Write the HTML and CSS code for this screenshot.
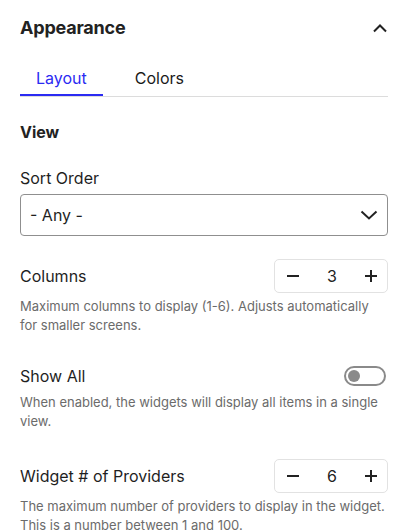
FILE: index.html
```html
<!DOCTYPE html>
<html>
<head>
<meta charset="utf-8">
<link rel="stylesheet" href="styles.css">
</head>
<body>
<div class="panel">
  <div class="header">
    <h2 class="title">Appearance</h2>
    <svg class="chev-up" width="16" height="10" viewBox="0 0 16 10"><path d="M2 8.5 L8 2.5 L14 8.5" fill="none" stroke="#222" stroke-width="2"/></svg>
  </div>
  <div class="tabs">
    <div class="tab active">Layout</div>
    <div class="tab">Colors</div>
  </div>
  <div class="section-title">View</div>
  <div class="label sort-label">Sort Order</div>
  <div class="select">
    <span>- Any -</span>
    <svg width="18" height="10" viewBox="0 0 18 10"><path d="M1.5 1.5 L9 8.5 L16.5 1.5" fill="none" stroke="#222" stroke-width="2"/></svg>
  </div>
  <div class="row row-columns">
    <div class="label">Columns</div>
    <div class="stepper">
      <svg width="12" height="12" viewBox="0 0 12 12"><path d="M0 6 H12" stroke="#222" stroke-width="2"/></svg>
      <span class="val">3</span>
      <svg width="12" height="12" viewBox="0 0 12 12"><path d="M0 6 H12 M6 0 V12" stroke="#222" stroke-width="2"/></svg>
    </div>
  </div>
  <p class="desc">Maximum columns to display (1-6). Adjusts automatically for smaller screens.</p>
  <div class="row row-show">
    <div class="label">Show All</div>
    <div class="toggle"><div class="knob"></div></div>
  </div>
  <p class="desc desc-show">When enabled, the widgets will display all items in a single view.</p>
  <div class="row row-widget">
    <div class="label">Widget # of Providers</div>
    <div class="stepper">
      <svg width="12" height="12" viewBox="0 0 12 12"><path d="M0 6 H12" stroke="#222" stroke-width="2"/></svg>
      <span class="val">6</span>
      <svg width="12" height="12" viewBox="0 0 12 12"><path d="M0 6 H12 M6 0 V12" stroke="#222" stroke-width="2"/></svg>
    </div>
  </div>
  <p class="desc">The maximum number of providers to display in the widget. This is a number between 1 and 100.</p>
</div>
</body>
</html>
```
FILE: styles.css
```css
html, body {
  margin: 0;
  padding: 0;
  background: #fff;
}
body {
  font-family: Inter, "Noto Sans", sans-serif;
  color: #222;
}
.panel {
  width: 368px;
  margin-left: 20px;
  display: flex;
  flex-direction: column;
}
.header {
  margin-top: 16px;
  height: 24px;
  display: flex;
  align-items: center;
  justify-content: space-between;
}
.title {
  margin: 0;
  font-size: 18px;
  font-weight: 700;
  line-height: 24px;
  letter-spacing: -0.2px;
  color: #222;
}
.tabs {
  margin-top: 18px;
  display: flex;
  gap: 16px;
  border-bottom: 1px solid #dcdcdc;
}
.tab {
  padding: 8px 16px 4px;
  font-size: 16px;
  line-height: 24px;
  border-bottom: 2px solid transparent;
  color: #1a1a1a;
}
.tab.active {
  color: #2b2bf2;
  border-bottom-color: #2b2bf2;
}
.section-title {
  margin-top: 24px;
  font-size: 16px;
  font-weight: 700;
  line-height: 22px;
  color: #222;
}
.label {
  font-size: 16px;
  line-height: 22px;
  color: #1f1f1f;
}
.sort-label {
  margin-top: 24px;
}
.select {
  margin-top: 5px;
  height: 40px;
  border: 1px solid #8f8f8f;
  border-radius: 4px;
  display: flex;
  align-items: center;
  justify-content: space-between;
  padding: 0 9px 0 9px;
  font-size: 16px;
  color: #1f1f1f;
}
.row {
  display: flex;
  align-items: center;
  justify-content: space-between;
}
.row-columns {
  margin-top: 23px;
}
.stepper {
  height: 32px;
  border: 1px solid #e2e2e2;
  border-radius: 5px;
  display: flex;
  align-items: center;
  justify-content: space-between;
  padding: 0 10px 0 12px;
  box-sizing: content-box;
  width: 90px;
}
.val {
  font-size: 16px;
  color: #222;
}
.desc {
  margin: 4px 0 0;
  font-size: 13px;
  line-height: 19px;
  color: #6b6b6b;
}
.row-show {
  margin-top: 30px;
}
.toggle {
  width: 34px;
  height: 16px;
  border: 2px solid #8a8a8a;
  border-radius: 10px;
  margin-right: 2px;
  display: flex;
  align-items: center;
  padding: 0 2px;
}
.knob {
  width: 12px;
  height: 12px;
  border-radius: 50%;
  background: #8a8a8a;
}
.desc-show {
  margin-top: 6px;
}
.row-widget {
  margin-top: 28px;
}
```
